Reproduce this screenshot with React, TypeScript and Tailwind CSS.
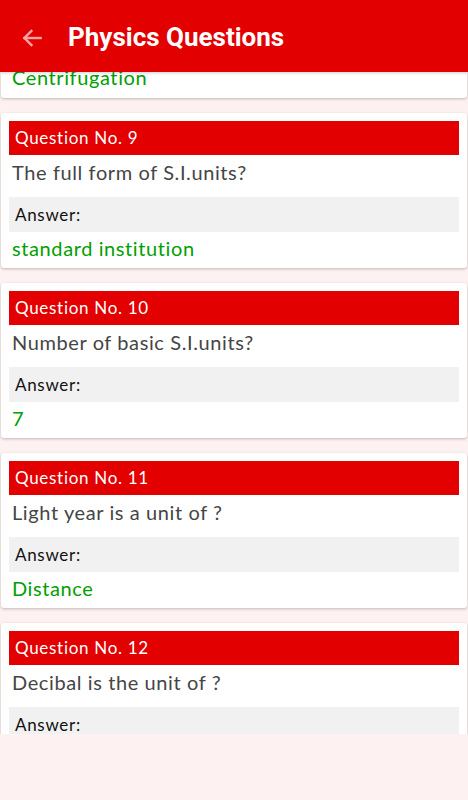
import React from "react";

const items = [
  { n: 9, q: "The full form of S.I.units?", a: "standard institution" },
  { n: 10, q: "Number of basic S.I.units?", a: "7" },
  { n: 11, q: "Light year is a unit of ?", a: "Distance" },
  { n: 12, q: "Decibal is the unit of ?", a: "Sound" },
];

const font = { fontFamily: "Lato, 'Open Sans', sans-serif" };

function Card({ n, q, a }: { n: number; q: string; a: string }) {
  return (
    <div className="mx-[1px] h-[155px] shrink-0 rounded-[3px] bg-white px-[8px] pt-[8px] shadow-[0_1px_3px_rgba(0,0,0,0.25)]">
      <div className="flex h-[34px] items-center bg-[#e30000] px-[6px] text-[17px] tracking-[0.7px] text-white">
        Question No. {n}
      </div>
      <div className="flex h-[34px] items-center px-[3px] text-[20px] tracking-[0.6px] text-[#454545]">{q}</div>
      <div className="mt-[8px] flex h-[35px] items-center bg-[#f1f1f1] px-[6px] text-[17px] tracking-[0.7px] text-[#111]">
        Answer:
      </div>
      <div className="flex h-[32px] items-center px-[3px] text-[20px] tracking-[0.6px] text-[#00a000]">{a}</div>
    </div>
  );
}

export default function App() {
  return (
    <div className="flex h-[800px] w-[468px] flex-col bg-[#fdf2f1]" style={font}>
      <div className="relative z-10 flex h-[72px] shrink-0 items-center bg-[#e30000] pt-[3px] shadow-[0_1px_3px_rgba(0,0,0,0.2)]">
        <svg className="ml-[19px]" width="26" height="26" viewBox="0 0 24 24" fill="none" stroke="#f7a3a3" strokeWidth="2.2" strokeLinecap="square">
          <path d="M20 12H5" />
          <path d="M11.5 5.5 5 12l6.5 6.5" />
        </svg>
        <div
          className="ml-[23px] text-[26px] font-bold text-white"
          style={{ fontFamily: "Roboto, 'Liberation Sans', sans-serif" }}
        >
          Physics Questions
        </div>
      </div>
      <div className="h-[662px] shrink-0 overflow-hidden">
        <div className="flex flex-col gap-[15px]">
          <div className="mx-[1px] h-[26px] shrink-0 overflow-hidden rounded-b-[3px] bg-white px-[8px] shadow-[0_1px_3px_rgba(0,0,0,0.25)]">
            <div className="mt-[-11px] flex h-[32px] items-center px-[3px] text-[20px] tracking-[0.6px] text-[#00a000]">
              Centrifugation
            </div>
          </div>
          {items.map((it) => (
            <Card key={it.n} {...it} />
          ))}
        </div>
      </div>
    </div>
  );
}
